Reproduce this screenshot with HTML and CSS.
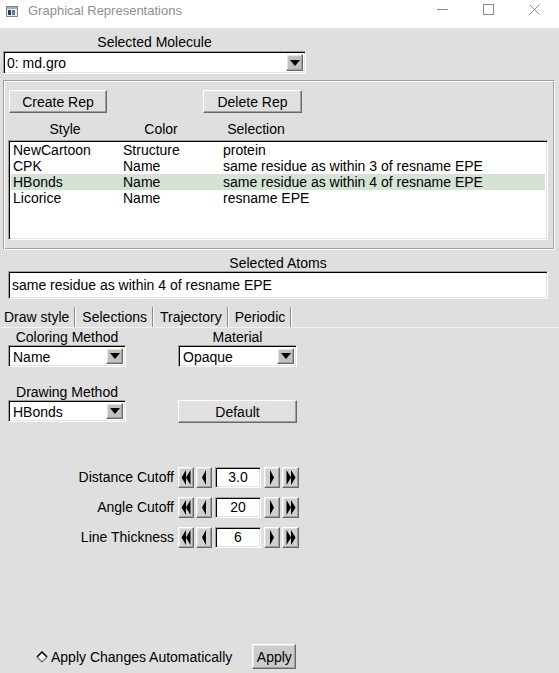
FILE: index.html
```html
<!DOCTYPE html>
<html>
<head>
<meta charset="utf-8">
<title>Graphical Representations</title>
<link rel="stylesheet" href="styles.css">
</head>
<body>
<div class="titlebar">
  <svg class="app-icon" width="12" height="11" viewBox="0 0 12 11">
    <rect x="0.5" y="0.5" width="11" height="10" fill="#e8eef4" stroke="#7d8790"/>
    <rect x="1" y="1" width="10" height="2" fill="#9fb3c8"/>
    <rect x="2" y="4" width="3" height="5" fill="#2d3e52"/>
    <rect x="6" y="4" width="3" height="5" fill="#5b7a9b"/>
  </svg>
  <span class="title">Graphical Representations</span>
  <div class="caption-btns">
    <span class="cap"><svg width="11" height="11" viewBox="0 0 11 11"><line x1="0" y1="5.5" x2="11" y2="5.5" stroke="#8a8a8a" stroke-width="1"/></svg></span>
    <span class="cap"><svg width="11" height="11" viewBox="0 0 11 11"><rect x="0.5" y="0.5" width="10" height="10" fill="none" stroke="#8a8a8a" stroke-width="1"/></svg></span>
    <span class="cap"><svg width="11" height="11" viewBox="0 0 11 11"><path d="M0.5 0.5 L10.5 10.5 M10.5 0.5 L0.5 10.5" stroke="#8a8a8a" stroke-width="1"/></svg></span>
  </div>
</div>

<div class="mol-block">
  <div class="mol-label">Selected Molecule</div>
  <div class="combo mol-combo">
    <span class="combo-text">0: md.gro</span>
    <span class="combo-btn"><svg width="10" height="6" viewBox="0 0 10 6"><polygon points="0,0 10,0 5,6" fill="#000"/></svg></span>
  </div>
</div>

<div class="frame">
  <div class="btn-row">
    <span class="btn create-btn">Create Rep</span>
    <span class="btn delete-btn">Delete Rep</span>
  </div>
  <div class="list-head">
    <span>Style</span><span>Color</span><span>Selection</span>
  </div>
  <div class="list">
    <div class="row"><span>NewCartoon</span><span>Structure</span><span>protein</span></div>
    <div class="row"><span>CPK</span><span>Name</span><span>same residue as within 3 of resname EPE</span></div>
    <div class="row selected"><span>HBonds</span><span>Name</span><span>same residue as within 4 of resname EPE</span></div>
    <div class="row"><span>Licorice</span><span>Name</span><span>resname EPE</span></div>
  </div>
</div>

<div class="atoms-label">Selected Atoms</div>
<div class="entry atoms-entry">same residue as within 4 of resname EPE</div>

<div class="tabs">
  <span class="tab tab-first">Draw style</span>
  <span class="tab">Selections</span>
  <span class="tab">Trajectory</span>
  <span class="tab">Periodic</span>
</div>

<div class="panel">
  <div class="grid2">
    <div class="field-label">Coloring Method</div>
    <div class="field-label">Material</div>
    <div class="combo small-combo">
      <span class="combo-text">Name</span>
      <span class="combo-btn"><svg width="10" height="6" viewBox="0 0 10 6"><polygon points="0,0 10,0 5,6" fill="#000"/></svg></span>
    </div>
    <div class="combo small-combo">
      <span class="combo-text">Opaque</span>
      <span class="combo-btn"><svg width="10" height="6" viewBox="0 0 10 6"><polygon points="0,0 10,0 5,6" fill="#000"/></svg></span>
    </div>
    <div class="field-label second">Drawing Method</div>
    <div class="field-label second"></div>
    <div class="combo small-combo">
      <span class="combo-text">HBonds</span>
      <span class="combo-btn"><svg width="10" height="6" viewBox="0 0 10 6"><polygon points="0,0 10,0 5,6" fill="#000"/></svg></span>
    </div>
    <span class="btn default-btn">Default</span>
  </div>

  <div class="spinners">
    <div class="spin-row">
      <span class="spin-label">Distance Cutoff</span>
      <span class="sbtn"><svg width="10" height="15" viewBox="0 0 10 15"><polygon points="5,0 0.5,7.5 5,15" fill="#000"/><polygon points="9.5,0 5,7.5 9.5,15" fill="#000"/></svg></span>
      <span class="sbtn"><svg width="6" height="15" viewBox="0 0 6 15"><polygon points="5,0 1,7.5 5,15" fill="#000"/></svg></span>
      <span class="entry spin-entry">3.0</span>
      <span class="sbtn sbtn-r"><svg width="6" height="15" viewBox="0 0 6 15"><polygon points="1,0 5,7.5 1,15" fill="#000"/></svg></span>
      <span class="sbtn sbtn-rr"><svg width="10" height="15" viewBox="0 0 10 15"><polygon points="0.5,0 5,7.5 0.5,15" fill="#000"/><polygon points="5,0 9.5,7.5 5,15" fill="#000"/></svg></span>
    </div>
    <div class="spin-row">
      <span class="spin-label">Angle Cutoff</span>
      <span class="sbtn"><svg width="10" height="15" viewBox="0 0 10 15"><polygon points="5,0 0.5,7.5 5,15" fill="#000"/><polygon points="9.5,0 5,7.5 9.5,15" fill="#000"/></svg></span>
      <span class="sbtn"><svg width="6" height="15" viewBox="0 0 6 15"><polygon points="5,0 1,7.5 5,15" fill="#000"/></svg></span>
      <span class="entry spin-entry">20</span>
      <span class="sbtn sbtn-r"><svg width="6" height="15" viewBox="0 0 6 15"><polygon points="1,0 5,7.5 1,15" fill="#000"/></svg></span>
      <span class="sbtn sbtn-rr"><svg width="10" height="15" viewBox="0 0 10 15"><polygon points="0.5,0 5,7.5 0.5,15" fill="#000"/><polygon points="5,0 9.5,7.5 5,15" fill="#000"/></svg></span>
    </div>
    <div class="spin-row">
      <span class="spin-label">Line Thickness</span>
      <span class="sbtn"><svg width="10" height="15" viewBox="0 0 10 15"><polygon points="5,0 0.5,7.5 5,15" fill="#000"/><polygon points="9.5,0 5,7.5 9.5,15" fill="#000"/></svg></span>
      <span class="sbtn"><svg width="6" height="15" viewBox="0 0 6 15"><polygon points="5,0 1,7.5 5,15" fill="#000"/></svg></span>
      <span class="entry spin-entry">6</span>
      <span class="sbtn sbtn-r"><svg width="6" height="15" viewBox="0 0 6 15"><polygon points="1,0 5,7.5 1,15" fill="#000"/></svg></span>
      <span class="sbtn sbtn-rr"><svg width="10" height="15" viewBox="0 0 10 15"><polygon points="0.5,0 5,7.5 0.5,15" fill="#000"/><polygon points="5,0 9.5,7.5 5,15" fill="#000"/></svg></span>
    </div>
  </div>

  <div class="apply-row">
    <svg class="diamond" width="12" height="12" viewBox="0 0 12 12">
      <polygon points="6,1 11,6 6,11 1,6" fill="#fafafa"/>
      <polyline points="1,6 6,1 11,6" fill="none" stroke="#000" stroke-width="1.6"/>
      <polyline points="1,6 6,11 11,6" fill="none" stroke="#6a6a6a" stroke-width="1.2"/>
    </svg>
    <span class="apply-text">Apply Changes Automatically</span>
    <span class="btn apply-btn">Apply</span>
  </div>
</div>
</body>
</html>
```

FILE: styles.css
```css
html, body {
  margin: 0;
  padding: 0;
}
body {
  width: 559px;
  height: 673px;
  overflow: hidden;
  background: #dfdfdf;
  font-family: "Liberation Sans", Arial, sans-serif;
  font-size: 14px;
  color: #000;
}

/* title bar */
.titlebar {
  height: 28px;
  background: #fff;
  display: flex;
  align-items: center;
  padding-left: 6px;
}
.app-icon {
  display: block;
  margin-top: -6px;
}
.title {
  margin-left: 10px;
  font-size: 13px;
  color: #8e8e8e;
  margin-top: -8px;
}
.caption-btns {
  margin-left: auto;
  margin-right: 2px;
  display: flex;
  align-self: stretch;
}
.cap {
  width: 46px;
  display: flex;
  align-items: center;
  justify-content: center;
  margin-top: -9px;
}
.cap svg { display: block; }

/* 3D borders */
.combo, .entry, .list {
  box-sizing: border-box;
  background: #fff;
  border: 1px solid;
  border-color: #a0a0a0 #fff #fff #a0a0a0;
  box-shadow: inset 1px 1px 0 #000, inset -1px -1px 0 #e3e3e3;
}
.btn, .combo-btn, .sbtn {
  box-sizing: border-box;
  border: 1px solid;
  border-color: #fff #696969 #696969 #fff;
  box-shadow: inset -1px -1px 0 #a0a0a0, inset 1px 1px 0 #e3e3e3;
}
.btn {
  display: flex;
  align-items: center;
  justify-content: center;
  background: #e0e0e0;
}

/* selected molecule */
.mol-block {
  width: 303px;
  margin-left: 3px;
}
.mol-label {
  text-align: center;
  line-height: 16px;
  padding-top: 6px;
}
.combo {
  display: flex;
  align-items: stretch;
  padding: 2px;
}
.mol-combo {
  margin-top: 1px;
  height: 23px;
}
.combo-text {
  flex: 1;
  line-height: 18px;
  padding-left: 1px;
}
.combo-btn {
  width: 17px;
  background: #c0c0c0;
  display: flex;
  align-items: center;
  justify-content: center;
}
.combo-btn svg { display: block; }

/* representations frame */
.frame {
  margin: 6px 0 0 3px;
  width: 552px;
  box-sizing: border-box;
  border: 1px solid;
  border-color: #a0a0a0 #fff #fff #a0a0a0;
  box-shadow: inset 1px 1px 0 #fff, inset -1px -1px 0 #a0a0a0;
  padding: 9px 6px 9px 4px;
}
.btn-row {
  display: flex;
}
.create-btn {
  margin-left: 1px;
  width: 98px;
  height: 23px;
}
.delete-btn {
  margin-left: 96px;
  width: 99px;
  height: 23px;
}
.list-head {
  margin-top: 8px;
  display: grid;
  grid-template-columns: 114px 78px 112px;
  line-height: 16px;
  text-align: center;
}
.list {
  margin-top: 3px;
  width: 540px;
  height: 100px;
  padding: 1px 2px;
}
.row {
  display: grid;
  grid-template-columns: 110px 100px 1fr;
  padding-left: 2px;
  line-height: 16px;
  white-space: nowrap;
}
.row.selected {
  background: #d4e3d3;
}

/* selected atoms */
.atoms-label {
  margin: 5px 0 0 8px;
  width: 540px;
  text-align: center;
  line-height: 16px;
}
.atoms-entry {
  margin-left: 8px;
  width: 540px;
  height: 28px;
  line-height: 24px;
  padding-left: 3px;
  padding-top: 1px;
}

/* tabs */
.tabs {
  margin-top: 8px;
  display: flex;
  height: 20px;
  border-bottom: 1px solid #f2f2f2;
}
.tab {
  line-height: 20px;
  padding: 0 5px 0 6px;
  border-right: 1px solid #8a8a8a;
  box-shadow: 1px 0 0 #fff;
  margin-right: 1px;
}
.tab-first {
  padding-left: 4px;
}

/* draw style panel */
.panel {
  padding-top: 1px;
}
.grid2 {
  margin-left: 8px;
  display: grid;
  grid-template-columns: 118px 119px;
  column-gap: 52px;
}
.field-label {
  text-align: center;
  line-height: 16px;
  height: 16px;
}
.field-label.second {
  margin-top: 17px;
}
.small-combo {
  height: 22px;
}
.small-combo .combo-text {
  padding-left: 2px;
}
.default-btn {
  height: 23px;
}

/* spinners */
.spinners {
  margin-top: 44px;
  display: flex;
  flex-direction: column;
  gap: 9px;
}
.spin-row {
  display: flex;
  align-items: stretch;
  height: 21px;
}
.spin-label {
  width: 174px;
  text-align: right;
  line-height: 21px;
  margin-right: 4px;
}
.sbtn {
  width: 16px;
  background: #d0d0d0;
  display: flex;
  align-items: center;
  justify-content: center;
  margin-right: 2px;
}
.sbtn svg { display: block; }
.spin-entry {
  width: 46px;
  margin: 0 3px 0 1px;
  text-align: center;
  line-height: 19px;
}
.sbtn-rr {
  width: 17px;
}

/* apply */
.apply-row {
  margin-top: 96px;
  display: flex;
  align-items: center;
  padding-left: 36px;
  height: 25px;
}
.diamond {
  display: block;
}
.apply-text {
  margin-left: 3px;
}
.apply-btn {
  margin-left: 20px;
  width: 44px;
  height: 25px;
  background: #cccccc;
}
```
